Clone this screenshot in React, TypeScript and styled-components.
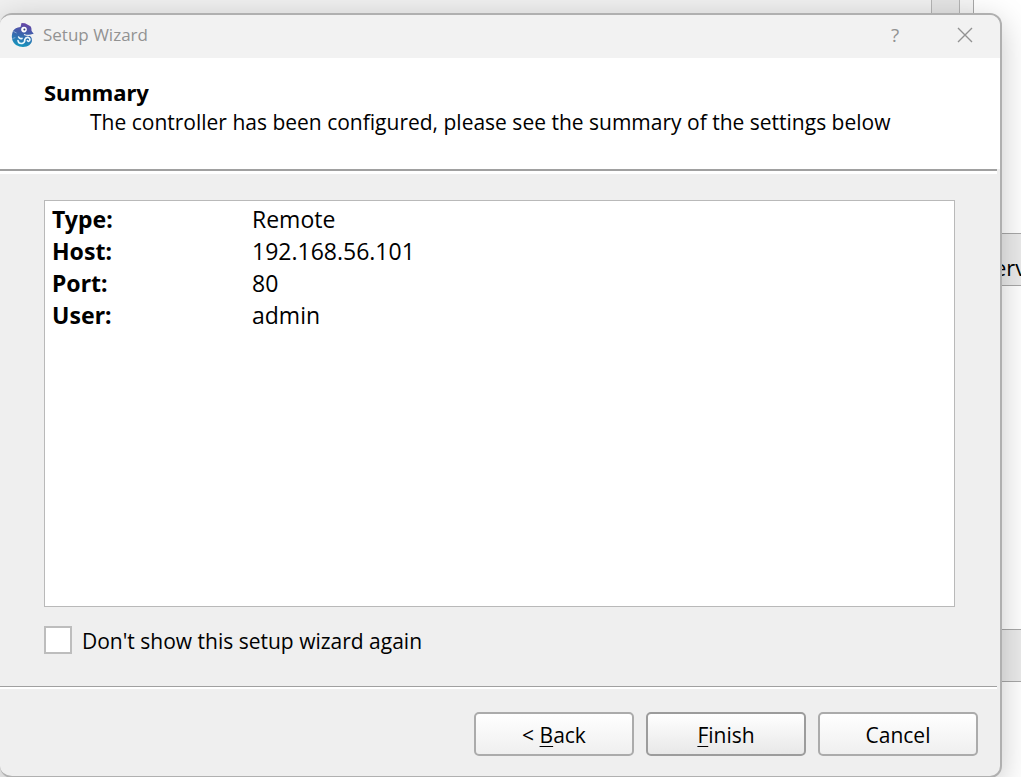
import React from "react";
import styled, { createGlobalStyle } from "styled-components";

const uiFont = `"Open Sans", "Noto Sans", sans-serif`;
const boldFont = `"Noto Sans", "Open Sans", sans-serif`;

const GlobalStyle = createGlobalStyle`
  *, *::before, *::after { box-sizing: border-box; }
  body { margin: 0; background: #fff; color: #000; font-family: ${uiFont}; }
  h1, h2, p { margin: 0; }
`;

const Desktop = styled.div`
  position: relative;
  height: 100vh;
  min-height: 560px;
  overflow: hidden;
  padding: 13px 19px 0 0;
`;

const BackWindow = styled.div`
  position: absolute;
  inset: 0;
  display: flex;
  background: #fff;
`;

const BackPane = styled.div`
  flex: 1;
  background: #f0f0f0;
`;

const BackTrack = styled.div`
  width: 29px;
  background: #e4e4e4;
  border: solid #b4b4b4;
  border-width: 0 1px;
`;

const BackGutter = styled.div`
  width: 14px;
  background: #f4f4f4;
  border-right: 1px solid #a8a8a8;
`;

const BackSide = styled.div`
  width: 47px;
  display: flex;
  flex-direction: column;
  padding-top: 233px;
  gap: 343px;
`;

const BackBar = styled.div`
  height: 53px;
  padding: 16px 0 0 20px;
  border: solid #a8a8a8;
  border-width: 1px 0;
  background: #ebebeb;
  font-size: 22px;
  line-height: 34px;
`;

const Dialog = styled.form`
  position: relative;
  display: flex;
  flex-direction: column;
  height: calc(100% + 1px);
  border: 2px solid #b0b0b0;
  border-left-width: 0;
  border-radius: 12px;
  background: #efefef;
  box-shadow: 0 8px 32px rgba(0, 0, 0, 0.22);
  overflow: hidden;
`;

const TitleBar = styled.header`
  display: flex;
  align-items: center;
  height: 43px;
  padding: 0 15px 3px 10px;
  background: #f2f2f2;
  color: #929292;
`;

const Title = styled.h1`
  flex: 1;
  margin-left: 7px;
  font-size: 17px;
  line-height: 24px;
  font-weight: 400;
`;

const CaptionButton = styled.button`
  display: grid;
  place-items: center;
  width: 40px;
  height: 36px;
  margin-left: 30px;
  padding: 0;
  border: 0;
  background: none;
  color: inherit;
  font: 19px ${uiFont};
`;

const Banner = styled.section`
  height: 111px;
  flex: none;
  padding: 19px 44px;
  background: #fff;
`;

const Heading = styled.h2`
  font-family: ${boldFont};
  font-size: 22px;
  line-height: 30px;
  font-weight: 700;
`;

const Subheading = styled.p`
  padding-left: 46px;
  font-size: 21px;
  line-height: 30px;
  white-space: nowrap;
`;

const Rule = styled.div<{ $heavy?: boolean }>`
  flex: none;
  height: ${(p) => (p.$heavy ? 5 : 3)}px;
  margin-right: 3px;
  border-top: ${(p) => (p.$heavy ? 2 : 1)}px solid #a0a0a0;
  background: #fff;
`;

const Body = styled.main`
  flex: 1;
  display: flex;
  flex-direction: column;
  padding: 26px 45px 30px 44px;
`;

const SummaryBox = styled.div`
  flex: 1;
  padding: 2px 7px;
  border: 1px solid #b9b9b9;
  background: #fff;
`;

const SummaryTable = styled.table`
  border-collapse: collapse;
  font-size: 23px;
  line-height: 32px;

  th {
    width: 200px;
    padding: 0;
    text-align: left;
    font-family: ${boldFont};
    font-weight: 700;
  }

  td { padding: 0; }
`;

const CheckLabel = styled.label`
  display: flex;
  align-items: flex-start;
  align-self: flex-start;
  gap: 10px;
  margin-top: 19px;
  font-size: 21px;
  line-height: 30px;
`;

const CheckBox = styled.input`
  appearance: none;
  width: 28px;
  height: 28px;
  margin: 0;
  border: 2px solid #bdbdbd;
  background: #fff;

  &:checked { background: #5a8fd0; }
`;

const Footer = styled.footer`
  display: flex;
  justify-content: flex-end;
  gap: 12px;
  padding: 23px 22px 20px;
`;

const WizardButton = styled.button<{ $primary?: boolean }>`
  width: 160px;
  height: 44px;
  padding: 2px 0 0;
  border: 2px solid ${(p) => (p.$primary ? "#9c9c9c" : "#ababab")};
  border-radius: 5px;
  background: linear-gradient(#fff, ${(p) => (p.$primary ? "#e8e8e8" : "#efefef")});
  color: #000;
  font: 21px/30px ${uiFont};
`;

const Mnemonic = styled.span`
  text-decoration: underline;
  text-decoration-thickness: 1px;
  text-underline-offset: 3px;
`;

const AppIcon = () => (
  <svg width="26" height="26" viewBox="0 0 26 26" aria-hidden="true">
    <defs>
      <linearGradient id="skin" x1="0.6" y1="0" x2="0.4" y2="1">
        <stop offset="0" stopColor="#6944a5" />
        <stop offset="0.45" stopColor="#3c62ac" />
        <stop offset="1" stopColor="#1597bd" />
      </linearGradient>
    </defs>
    <path
      d="M11.5 1 L15 1.2 L20.5 4.2 Q22 6 21.6 9 L23.8 12 L19.5 13.2 Q22.3 15.5 22 19 Q21 24.5 13 25 Q5 25 2.5 18.5 Q1 13.5 3 9 Q5 5.5 10.5 5 Z"
      fill="url(#skin)"
    />
    <path d="M23.8 12.2 Q19 14.4 14 12.4" fill="none" stroke="#f2f2f2" strokeWidth="1.1" />
    <circle cx="14" cy="7.6" r="2.8" fill="#fff" />
    <circle cx="14.4" cy="7.5" r="1" fill="#343e72" />
    <path
      d="M8.6 15 Q9.5 17.2 12 16.4 M8 18.6 Q8.6 22 12.2 21.4 Q15 20.6 14.8 17.6 Q15.6 15 18.2 15.4 Q20.6 16.4 19.6 18.8 Q18.4 20 17.4 18.6"
      fill="none"
      stroke="#edf8fc"
      strokeWidth="1.6"
      strokeLinecap="round"
    />
    <path d="M3.4 9.4 L6.6 11 M2.5 16.5 L5.3 15.6" stroke="#9ab5d9" strokeWidth="0.8" />
  </svg>
);

const CloseIcon = () => (
  <svg width="16" height="16" viewBox="0 0 16 16" aria-hidden="true">
    <path d="M1 1 L15 15 M15 1 L1 15" stroke="#929292" strokeWidth="1.4" fill="none" />
  </svg>
);

const settings = [
  ["Type:", "Remote"],
  ["Host:", "192.168.56.101"],
  ["Port:", "80"],
  ["User:", "admin"],
];

export default function App() {
  return (
    <>
      <GlobalStyle />
      <Desktop>
        <BackWindow>
          <BackPane />
          <BackTrack />
          <BackGutter />
          <BackSide>
            <BackBar>erv</BackBar>
            <BackBar />
          </BackSide>
        </BackWindow>
        <Dialog onSubmit={(e) => e.preventDefault()}>
          <TitleBar>
            <AppIcon />
            <Title>Setup Wizard</Title>
            <CaptionButton type="button" aria-label="Help">
              ?
            </CaptionButton>
            <CaptionButton type="button" aria-label="Close">
              <CloseIcon />
            </CaptionButton>
          </TitleBar>
          <Banner>
            <Heading>Summary</Heading>
            <Subheading>
              The controller has been configured, please see the summary of the settings below
            </Subheading>
          </Banner>
          <Rule $heavy />
          <Body>
            <SummaryBox>
              <SummaryTable>
                <tbody>
                  {settings.map(([name, value]) => (
                    <tr key={name}>
                      <th scope="row">{name}</th>
                      <td>{value}</td>
                    </tr>
                  ))}
                </tbody>
              </SummaryTable>
            </SummaryBox>
            <CheckLabel htmlFor="skip-wizard">
              <CheckBox id="skip-wizard" type="checkbox" />
              Don't show this setup wizard again
            </CheckLabel>
          </Body>
          <Rule />
          <Footer>
            <WizardButton type="button">
              &lt; <Mnemonic>B</Mnemonic>ack
            </WizardButton>
            <WizardButton type="submit" $primary>
              <Mnemonic>F</Mnemonic>inish
            </WizardButton>
            <WizardButton type="button">Cancel</WizardButton>
          </Footer>
        </Dialog>
      </Desktop>
    </>
  );
}
